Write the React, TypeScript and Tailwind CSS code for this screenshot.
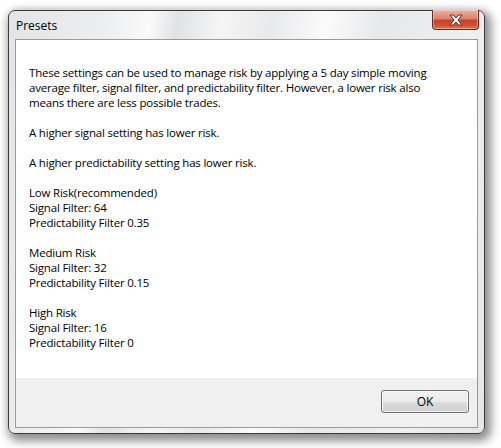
import React from 'react';

const lines: string[][] = [
    [
        'These settings can be used to manage risk by applying a 5 day simple moving',
        'average filter, signal filter, and predictability filter. However, a lower risk also',
        'means there are less possible trades.',
    ],
    ['A higher signal setting has lower risk.'],
    ['A higher predictability setting has lower risk.'],
    ['Low Risk(recommended)', 'Signal Filter: 64', 'Predictability Filter 0.35'],
    ['Medium Risk', 'Signal Filter: 32', 'Predictability Filter 0.15'],
    ['High Risk', 'Signal Filter: 16', 'Predictability Filter 0'],
];

const CloseGlyph: React.FC = () => (
    <svg width="16" height="12" viewBox="0 0 16 12">
        <path
            d="M2 1 L5.5 1 L8 4 L10.5 1 L14 1 L10 6 L14 11 L10.5 11 L8 8 L5.5 11 L2 11 L6 6 Z"
            fill="#ffffff"
            stroke="#5a2a20"
            strokeWidth="1"
            strokeLinejoin="round"
        />
    </svg>
);

const App: React.FC = () => {
    return (
        <div className="w-[501px] h-[448px] bg-white pt-[10px] pl-[8px] overflow-hidden font-['Open_Sans','Noto_Sans',sans-serif]">
            <div className="relative w-[477px] h-[424px] rounded-[7px] border border-[#3a3a3a] shadow-[3px_4px_10px_3px_rgba(0,0,0,0.45)] bg-[linear-gradient(100deg,#e2e4e7_0%,#eceef0_18%,#fafafa_26%,#e0e2e5_31%,#f5f5f5_39%,#e8e9eb_48%,#fbfbfb_58%,#e6e8eb_68%,#eeeff1_85%,#e4e6e9_100%)]">
                <div className="h-[28px] pl-[7px] pt-[7px] text-[12px] leading-[15px] text-black">Presets</div>

                <div className="absolute top-[-1px] right-[5px] w-[47px] h-[20px] rounded-b-[4px] border border-[#6b2a1e] border-t-0 bg-[linear-gradient(180deg,#eab0a2_0%,#d98470_45%,#c4452b_55%,#d0502f_80%,#e07a55_100%)] flex items-center justify-center shadow-[inset_0_0_0_1px_rgba(255,255,255,0.35)]">
                    <CloseGlyph />
                </div>

                <div className="mx-[6px] h-[389px] border border-[#9a9a9a] flex flex-col">
                    <div className="flex-1 bg-white pl-[13px] pt-[25px] text-[11.5px] leading-[15px] text-black tracking-[-0.2px]">
                        {lines.map((group, i) => (
                            <div key={i} className="mb-[15px]">
                                {group.map((line) => (
                                    <div key={line}>{line}</div>
                                ))}
                            </div>
                        ))}
                    </div>
                    <div className="h-[49px] bg-[#f0f0f0] flex justify-end pr-[8px] pt-[12px]">
                        <button className="w-[88px] h-[23px] rounded-[3px] border border-[#707070] bg-[linear-gradient(180deg,#f2f2f2_0%,#ebebeb_50%,#dddddd_51%,#cfcfcf_100%)] shadow-[inset_0_0_0_1px_rgba(255,255,255,0.7)] text-[12px] text-black">
                            OK
                        </button>
                    </div>
                </div>
            </div>
        </div>
    );
};

export default App;
